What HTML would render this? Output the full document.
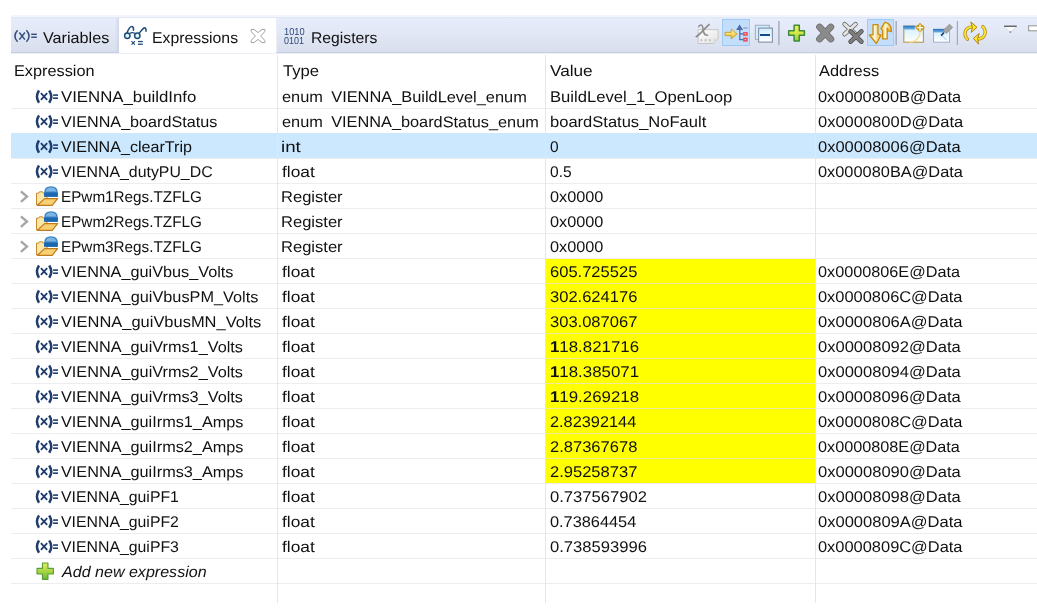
<!DOCTYPE html>
<html><head><meta charset="utf-8"><title>Expressions</title>
<style>
html,body{margin:0;padding:0;background:#fff;}
body{width:1037px;height:616px;position:relative;overflow:hidden;font-family:'Liberation Sans', sans-serif;font-size:15.5px;color:#111;}
.t{position:absolute;white-space:pre;line-height:15.5px;transform-origin:0 0;display:block;}
.i{position:absolute;display:block;}
.hl{position:absolute;left:11px;width:1026px;height:1px;background:#ededed;}
.vl{position:absolute;top:55px;width:1px;height:548px;background:#e6e6ea;}
.sel{position:absolute;left:11px;width:1026px;height:25px;background:#cce8ff;}
.yel{position:absolute;left:546px;width:269px;height:24px;background:#ffff00;}
.yl{position:absolute;left:546px;width:269px;height:1px;background:#ecec9c;}
#tx{position:absolute;left:0;top:0;width:1037px;height:616px;will-change:transform;}
#bar{position:absolute;left:11px;top:15px;width:1026px;height:39px;}
</style></head><body>
<div id="bar">
<div style="position:absolute;left:0;top:0;width:1026px;height:2px;background:#f3f5fd"></div>
<div style="position:absolute;left:0;top:2px;width:1026px;height:36px;background:linear-gradient(#e8edfb,#e3e8f6 40%,#d8deed)"></div>
<div style="position:absolute;left:0;top:2px;width:1026px;height:1px;background:#e2e7f5"></div>
<div style="position:absolute;left:0;top:37px;width:1026px;height:1px;background:#c7cde0"></div>
<div style="position:absolute;left:0;top:38px;width:1026px;height:1px;background:#eef0f7"></div>
<div style="position:absolute;left:104px;top:3px;width:4px;height:34px;background:linear-gradient(90deg,rgba(200,206,226,0),rgba(200,206,226,0.7))"></div>
<div style="position:absolute;left:108px;top:3px;width:157px;height:35px;background:#fff"></div>
<div style="position:absolute;left:265px;top:3px;width:1px;height:34px;background:#eceef5"></div>
</div>
<svg class="i" style="left:11px;top:15px" width="1026" height="39" viewBox="11 15 1026 39">
<defs>
<linearGradient id="gGold" x1="0" y1="0" x2="0" y2="1"><stop offset="0" stop-color="#fff8d0"/><stop offset="0.55" stop-color="#fbd862"/><stop offset="1" stop-color="#eeb422"/></linearGradient>
<linearGradient id="gGold2" x1="0" y1="0" x2="1" y2="0"><stop offset="0" stop-color="#f2bc32"/><stop offset="0.45" stop-color="#fff8dc"/><stop offset="1" stop-color="#efb020"/></linearGradient>
<linearGradient id="gPlus" x1="0" y1="0" x2="0" y2="1"><stop offset="0" stop-color="#f6f052"/><stop offset="0.5" stop-color="#d2e84a"/><stop offset="1" stop-color="#86d238"/></linearGradient>
<linearGradient id="gWin" x1="0" y1="0" x2="0" y2="1"><stop offset="0" stop-color="#cfeefc"/><stop offset="1" stop-color="#ffffff"/></linearGradient>
<linearGradient id="gTitle" x1="0" y1="0" x2="0" y2="1"><stop offset="0" stop-color="#1f6fc0"/><stop offset="1" stop-color="#7fb6e6"/></linearGradient>
<linearGradient id="gLabel" x1="0" y1="0" x2="1" y2="1"><stop offset="0" stop-color="#ffffff"/><stop offset="1" stop-color="#e2e2e2"/></linearGradient>
</defs>
<!-- Variables tab icon (x)= -->
<g fill="none" stroke="#2f4d7c" stroke-width="1.5">
<path d="M17.6 30.2 Q12.2 36 17.6 41.7"/>
<path d="M26.4 30.2 Q31.8 36 26.4 41.7"/>
<path d="M19.3 32.5 L24.9 39.6 M24.9 32.5 L19.3 39.6" stroke-width="1.4"/>
</g>
<rect x="31.2" y="33.6" width="5.6" height="1.4" fill="#2f4d7c"/><rect x="31.2" y="36.5" width="5.6" height="1.4" fill="#2f4d7c"/>
<!-- Expressions glasses icon -->
<g fill="none" stroke="#1f4a78" stroke-width="1.5" stroke-linecap="round">
<circle cx="127.3" cy="35.8" r="2.7" fill="#dcf6fb"/>
<circle cx="137.3" cy="35.8" r="2.7" fill="#dcf6fb"/>
<path d="M129.8 33.2 Q132.3 32.1 134.8 33.2" stroke-width="1.1"/>
<path d="M127.0 32.9 C128.4 29.2 130.4 26.3 132 26.5 C133.3 26.7 133.6 28.4 133.5 30.2"/>
<path d="M139.3 33.1 C141.4 30.6 143 28 144.6 27.8 C145.8 27.7 146.1 29.4 146 31.3"/>
<path d="M131.5 41.1 L134.9 44.6 M134.9 41.1 L131.5 44.6" stroke-width="1.1" stroke-linecap="butt"/>
</g>
<rect x="138" y="40.9" width="4.8" height="1.3" fill="#1f4a78"/><rect x="138" y="43.6" width="4.8" height="1.3" fill="#1f4a78"/>
<!-- close X -->
<path d="M251.2 29.4 H254 L258 32.6 L262 29.4 H264.8 V31.6 L260.6 36 L264.8 40.4 V42.6 H262 L258 39.4 L254 42.6 H251.2 V40.4 L255.4 36 L251.2 31.6 Z" fill="#fff" stroke="#979797" stroke-width="0.9" stroke-linejoin="round"/>

<!-- toolbar -->
<!-- 1: show type names (disabled) -->
<path d="M698.2 29.6 H718.2 V38.8 L713.6 43.5 H698.2 Z" fill="url(#gLabel)" stroke="#c6c6c6" stroke-width="1"/>
<path d="M713.6 43.5 V38.8 H718.2 Z" fill="#dcdcdc"/>
<rect x="700.3" y="39.2" width="2" height="2.1" fill="#c2c2c2"/><rect x="704.6" y="39.2" width="2" height="2.1" fill="#c2c2c2"/><rect x="708.9" y="39.2" width="2" height="2.1" fill="#c2c2c2"/>
<g fill="none" stroke="#8e8e8e" stroke-linecap="round">
<path d="M696.4 36.6 C700 34.5 705 28 709 24.6" stroke-width="1.9"/>
<path d="M698.6 26.6 C700.5 24 702.5 24.5 702.8 27.5 C703.2 31 703.4 35.6 707.6 35.2" stroke-width="1.5"/>
</g>
<!-- 2: highlighted -->
<rect x="722.5" y="19.5" width="27" height="26" fill="#c3defa" stroke="#9ccbf8" stroke-width="1"/>
<path d="M725 32.3 H731.2 V29 L737 33.9 L731.2 38.8 V35.6 H725 Z" fill="url(#gGold)" stroke="#c99a1c" stroke-width="0.9" stroke-linejoin="round"/>
<path d="M739.6 24.4 L743.1 30 H736.1 Z" fill="#4a6aa8"/>
<path d="M739.8 29.8 V39.7 H743.2 M739.8 33.8 H743.2" fill="none" stroke="#4a6aa8" stroke-width="1.2"/>
<rect x="743.2" y="27.4" width="4.4" height="1.1" fill="#8093bd"/>
<rect x="743.1" y="32.1" width="4.6" height="3.7" fill="#e8495a"/><rect x="744.6" y="33.4" width="1.6" height="1" fill="#fbd0d4"/>
<rect x="743.1" y="37.6" width="4.6" height="4" fill="#e8495a"/><rect x="744.6" y="39.1" width="1.6" height="1" fill="#fbd0d4"/>
<!-- 3: collapse all -->
<rect x="755.4" y="25.3" width="14" height="14.2" fill="#cdeefc" stroke="#a7afc4" stroke-width="1.1"/>
<rect x="758.6" y="28.1" width="13.8" height="14" fill="url(#gWin)" stroke="#8a95ae" stroke-width="1.2"/>
<rect x="760" y="34" width="10" height="2" fill="#0c4f86"/>
<rect x="778.1" y="21" width="1.6" height="24" fill="#abafbf"/>
<!-- 4: plus -->
<path d="M794.1 25.2 H799.3 V30.8 H804.4 V35.2 H799.3 V40.9 H794.1 V35.2 H788.7 V30.8 H794.1 Z" fill="url(#gPlus)" stroke="#3d8a3a" stroke-width="1.5" stroke-linejoin="round"/>
<!-- 5: X -->
<g stroke-linecap="round">
<path d="M819.6 27 L830.8 39 M830.8 27 L819.6 39" stroke="#6a6a6a" stroke-width="6.8"/>
<path d="M819.6 27 L830.8 39 M830.8 27 L819.6 39" stroke="#8a8a8a" stroke-width="5.4"/>
<!-- 6: XX -->
<path d="M844.6 24.2 L855.6 34.2 M855.6 24.2 L844.6 34.2" stroke="#5a5a5a" stroke-width="4.4"/>
<path d="M844.6 24.2 L855.6 34.2 M855.6 24.2 L844.6 34.2" stroke="#e4e4e0" stroke-width="3"/>
<path d="M850.6 31.4 L861.4 41.6 M861.4 31.4 L850.6 41.6" stroke="#484848" stroke-width="4.6"/>
<path d="M850.6 31.4 L861.4 41.6 M861.4 31.4 L850.6 41.6" stroke="#7e7e7e" stroke-width="3.2"/>
</g>
<!-- 7: highlighted yellow arrows -->
<rect x="867.5" y="19.5" width="26.1" height="26" fill="#c3defa" stroke="#9ccbf8" stroke-width="1"/>
<path d="M873 24.7 H878 V34 L880.9 35.2 L876.4 43.5 L869.4 35 L873 34.6 Z" fill="url(#gGold2)" stroke="#c98c0c" stroke-width="1.3" stroke-linejoin="round"/>
<path d="M882.6 38.8 V30.4 L880.9 28.6 L885 22.2 C888.8 23.4 891.8 26.6 891.4 31.6 L888.2 30.8 C888.2 29.4 887.8 28.6 887.2 28.2 V38.8 Z" fill="url(#gGold2)" stroke="#c98c0c" stroke-width="1.3" stroke-linejoin="round"/>
<rect x="895.4" y="21" width="1.6" height="24" fill="#abafbf"/>
<!-- 8: new view -->
<rect x="903.8" y="26.2" width="19.6" height="16" fill="url(#gWin)" stroke="#b8964a" stroke-width="1.1"/>
<rect x="903.3" y="25.7" width="11.5" height="3.9" fill="url(#gTitle)"/>
<path d="M920 31.5 C920 37.5 916 42 909.5 42.2" fill="none" stroke="#fbe08a" stroke-width="1.3"/>
<path d="M920 22.8 L925.1 27.7 L920 32.2 L915 27.7 Z" fill="#c89a18"/>
<path d="M920 24.4 V31 M916.8 27.7 H923.2" stroke="#fffbe8" stroke-width="1.3"/>
<!-- 9: pin -->
<rect x="933.5" y="29.4" width="16" height="12.8" fill="url(#gWin)" stroke="#9fb0cc" stroke-width="1"/>
<rect x="933" y="28.9" width="12" height="3.6" fill="url(#gTitle)"/>
<path d="M942 35.6 L946.6 40.2" stroke="#a8d8f2" stroke-width="1.1"/>
<path d="M941 35.6 L944 32.6" stroke="#1a3a78" stroke-width="1.6"/>
<path d="M943.2 30.4 L949.6 24.2 L952.6 27.4 L946.2 33.4 Z" fill="#a4a4a4" stroke="#8e8e8e" stroke-width="0.8"/>
<rect x="956.8" y="21" width="1.2" height="24" fill="#a4a8b8"/>
<!-- 10: refresh -->
<g fill="none" stroke-linecap="round">
<path d="M967.4 39.2 C962.6 34 965.5 27 972 26.8" stroke="#b08a24" stroke-width="3.3"/>
<path d="M967.4 39.2 C962.6 34 965.5 27 972 26.8" stroke="#fbe82a" stroke-width="1.8"/>
<path d="M982.8 26.6 C987.6 31.8 984.5 38.8 978 39" stroke="#b08a24" stroke-width="3.3"/>
<path d="M982.8 26.6 C987.6 31.8 984.5 38.8 978 39" stroke="#fbe82a" stroke-width="1.8"/>
</g>
<path d="M970.8 21.9 L977 27.3 L971.2 32.4 L972.4 27.3 Z" fill="#fdec2c" stroke="#b08216" stroke-width="1" stroke-linejoin="round"/>
<path d="M979.2 33.5 L973.4 38.4 L978.6 44.2 L977.6 38.8 Z" fill="#fdec2c" stroke="#b08216" stroke-width="1" stroke-linejoin="round"/>
<!-- 11: view menu -->
<path d="M1004.4 26.4 H1016.4 L1010.4 32.6 Z" fill="#fbfbfe" stroke="#d4d6e0" stroke-width="0.8"/>
<rect x="1004" y="25.6" width="12.8" height="1.3" fill="#5a5a5a"/>
<rect x="1009.7" y="31.4" width="1.4" height="1.2" fill="#5a5a5a"/>
<!-- 12: minimize -->
<rect x="1028.6" y="25.8" width="12" height="5" fill="#fff" stroke="#9a9a9a" stroke-width="1.1"/>
</svg>

<div class="sel" style="top:133px"></div>
<div class="yel" style="top:259px"></div>
<div class="yel" style="top:284px"></div>
<div class="yel" style="top:309px"></div>
<div class="yel" style="top:334px"></div>
<div class="yel" style="top:359px"></div>
<div class="yel" style="top:384px"></div>
<div class="yel" style="top:409px"></div>
<div class="yel" style="top:434px"></div>
<div class="yel" style="top:459px"></div>
<div class="hl" style="top:108px"></div>
<div class="hl" style="top:158px"></div>
<div class="hl" style="top:183px"></div>
<div class="hl" style="top:208px"></div>
<div class="hl" style="top:233px"></div>
<div class="hl" style="top:258px"></div>
<div class="hl" style="top:283px"></div>
<div class="hl" style="top:308px"></div>
<div class="hl" style="top:333px"></div>
<div class="hl" style="top:358px"></div>
<div class="hl" style="top:383px"></div>
<div class="hl" style="top:408px"></div>
<div class="hl" style="top:433px"></div>
<div class="hl" style="top:458px"></div>
<div class="hl" style="top:483px"></div>
<div class="hl" style="top:508px"></div>
<div class="hl" style="top:533px"></div>
<div class="hl" style="top:558px"></div>
<div class="hl" style="top:583px"></div>
<div class="yl" style="top:283px"></div>
<div class="yl" style="top:308px"></div>
<div class="yl" style="top:333px"></div>
<div class="yl" style="top:358px"></div>
<div class="yl" style="top:383px"></div>
<div class="yl" style="top:408px"></div>
<div class="yl" style="top:433px"></div>
<div class="yl" style="top:458px"></div>
<div class="vl" style="left:277px"></div>
<div class="vl" style="left:545px"></div>
<div class="vl" style="left:815px"></div>
<svg class="i" style="left:34px;top:89px" width="26" height="18" viewBox="0 0 26 18"><g fill="none" stroke="#1f3d6e"><path d="M5.0 1.5 Q0.9 7.6 5.0 13.7" stroke-width="2.5"/><path d="M15.2 1.5 Q19.3 7.6 15.2 13.7" stroke-width="2.5"/><path d="M6.9 4.2 L13.2 10.8 M13.2 4.2 L6.9 10.8" stroke-width="1.8"/></g><rect x="19.1" y="5.3" width="4.9" height="1.6" fill="#1f3d6e"/><rect x="19.1" y="8.4" width="4.9" height="1.6" fill="#1f3d6e"/></svg>
<svg class="i" style="left:34px;top:114px" width="26" height="18" viewBox="0 0 26 18"><g fill="none" stroke="#1f3d6e"><path d="M5.0 1.5 Q0.9 7.6 5.0 13.7" stroke-width="2.5"/><path d="M15.2 1.5 Q19.3 7.6 15.2 13.7" stroke-width="2.5"/><path d="M6.9 4.2 L13.2 10.8 M13.2 4.2 L6.9 10.8" stroke-width="1.8"/></g><rect x="19.1" y="5.3" width="4.9" height="1.6" fill="#1f3d6e"/><rect x="19.1" y="8.4" width="4.9" height="1.6" fill="#1f3d6e"/></svg>
<svg class="i" style="left:34px;top:139px" width="26" height="18" viewBox="0 0 26 18"><g fill="none" stroke="#1f3d6e"><path d="M5.0 1.5 Q0.9 7.6 5.0 13.7" stroke-width="2.5"/><path d="M15.2 1.5 Q19.3 7.6 15.2 13.7" stroke-width="2.5"/><path d="M6.9 4.2 L13.2 10.8 M13.2 4.2 L6.9 10.8" stroke-width="1.8"/></g><rect x="19.1" y="5.3" width="4.9" height="1.6" fill="#1f3d6e"/><rect x="19.1" y="8.4" width="4.9" height="1.6" fill="#1f3d6e"/></svg>
<svg class="i" style="left:34px;top:164px" width="26" height="18" viewBox="0 0 26 18"><g fill="none" stroke="#1f3d6e"><path d="M5.0 1.5 Q0.9 7.6 5.0 13.7" stroke-width="2.5"/><path d="M15.2 1.5 Q19.3 7.6 15.2 13.7" stroke-width="2.5"/><path d="M6.9 4.2 L13.2 10.8 M13.2 4.2 L6.9 10.8" stroke-width="1.8"/></g><rect x="19.1" y="5.3" width="4.9" height="1.6" fill="#1f3d6e"/><rect x="19.1" y="8.4" width="4.9" height="1.6" fill="#1f3d6e"/></svg>
<svg class="i" style="left:17px;top:184px" width="44" height="24" viewBox="0 0 44 24"><path d="M3.9 7.3 L10.0 12.6 L3.9 17.9" fill="none" stroke="#a6a6a6" stroke-width="2.4"/><path d="M19.5 21 V9.2 H21.6 L22.4 7.8 H25.6 L26.4 9.2 H30 V21 Z" fill="#fbe7a6" stroke="#c8862a" stroke-width="1"/><path d="M27.2 12.8 V8.5 Q27.2 2.2 34 2.2 Q40.8 2.2 40.8 8.5 V12.8 Z" fill="#3b85c9"/><path d="M28.6 7.5 Q29.5 3.4 34 3.4 Q38.5 3.4 39.4 7.5 Z" fill="#8fc0e6" opacity="0.8"/><rect x="27.2" y="8.6" width="13.6" height="4.2" fill="#1c68b0"/><path d="M20.5 21.3 L27.6 14.6 H40.6 L35.2 21.3 Z" fill="#f8d072" stroke="#c07a1c" stroke-width="1.2" stroke-linejoin="round"/></svg>
<svg class="i" style="left:17px;top:209px" width="44" height="24" viewBox="0 0 44 24"><path d="M3.9 7.3 L10.0 12.6 L3.9 17.9" fill="none" stroke="#a6a6a6" stroke-width="2.4"/><path d="M19.5 21 V9.2 H21.6 L22.4 7.8 H25.6 L26.4 9.2 H30 V21 Z" fill="#fbe7a6" stroke="#c8862a" stroke-width="1"/><path d="M27.2 12.8 V8.5 Q27.2 2.2 34 2.2 Q40.8 2.2 40.8 8.5 V12.8 Z" fill="#3b85c9"/><path d="M28.6 7.5 Q29.5 3.4 34 3.4 Q38.5 3.4 39.4 7.5 Z" fill="#8fc0e6" opacity="0.8"/><rect x="27.2" y="8.6" width="13.6" height="4.2" fill="#1c68b0"/><path d="M20.5 21.3 L27.6 14.6 H40.6 L35.2 21.3 Z" fill="#f8d072" stroke="#c07a1c" stroke-width="1.2" stroke-linejoin="round"/></svg>
<svg class="i" style="left:17px;top:234px" width="44" height="24" viewBox="0 0 44 24"><path d="M3.9 7.3 L10.0 12.6 L3.9 17.9" fill="none" stroke="#a6a6a6" stroke-width="2.4"/><path d="M19.5 21 V9.2 H21.6 L22.4 7.8 H25.6 L26.4 9.2 H30 V21 Z" fill="#fbe7a6" stroke="#c8862a" stroke-width="1"/><path d="M27.2 12.8 V8.5 Q27.2 2.2 34 2.2 Q40.8 2.2 40.8 8.5 V12.8 Z" fill="#3b85c9"/><path d="M28.6 7.5 Q29.5 3.4 34 3.4 Q38.5 3.4 39.4 7.5 Z" fill="#8fc0e6" opacity="0.8"/><rect x="27.2" y="8.6" width="13.6" height="4.2" fill="#1c68b0"/><path d="M20.5 21.3 L27.6 14.6 H40.6 L35.2 21.3 Z" fill="#f8d072" stroke="#c07a1c" stroke-width="1.2" stroke-linejoin="round"/></svg>
<svg class="i" style="left:34px;top:264px" width="26" height="18" viewBox="0 0 26 18"><g fill="none" stroke="#1f3d6e"><path d="M5.0 1.5 Q0.9 7.6 5.0 13.7" stroke-width="2.5"/><path d="M15.2 1.5 Q19.3 7.6 15.2 13.7" stroke-width="2.5"/><path d="M6.9 4.2 L13.2 10.8 M13.2 4.2 L6.9 10.8" stroke-width="1.8"/></g><rect x="19.1" y="5.3" width="4.9" height="1.6" fill="#1f3d6e"/><rect x="19.1" y="8.4" width="4.9" height="1.6" fill="#1f3d6e"/></svg>
<svg class="i" style="left:34px;top:289px" width="26" height="18" viewBox="0 0 26 18"><g fill="none" stroke="#1f3d6e"><path d="M5.0 1.5 Q0.9 7.6 5.0 13.7" stroke-width="2.5"/><path d="M15.2 1.5 Q19.3 7.6 15.2 13.7" stroke-width="2.5"/><path d="M6.9 4.2 L13.2 10.8 M13.2 4.2 L6.9 10.8" stroke-width="1.8"/></g><rect x="19.1" y="5.3" width="4.9" height="1.6" fill="#1f3d6e"/><rect x="19.1" y="8.4" width="4.9" height="1.6" fill="#1f3d6e"/></svg>
<svg class="i" style="left:34px;top:314px" width="26" height="18" viewBox="0 0 26 18"><g fill="none" stroke="#1f3d6e"><path d="M5.0 1.5 Q0.9 7.6 5.0 13.7" stroke-width="2.5"/><path d="M15.2 1.5 Q19.3 7.6 15.2 13.7" stroke-width="2.5"/><path d="M6.9 4.2 L13.2 10.8 M13.2 4.2 L6.9 10.8" stroke-width="1.8"/></g><rect x="19.1" y="5.3" width="4.9" height="1.6" fill="#1f3d6e"/><rect x="19.1" y="8.4" width="4.9" height="1.6" fill="#1f3d6e"/></svg>
<svg class="i" style="left:34px;top:339px" width="26" height="18" viewBox="0 0 26 18"><g fill="none" stroke="#1f3d6e"><path d="M5.0 1.5 Q0.9 7.6 5.0 13.7" stroke-width="2.5"/><path d="M15.2 1.5 Q19.3 7.6 15.2 13.7" stroke-width="2.5"/><path d="M6.9 4.2 L13.2 10.8 M13.2 4.2 L6.9 10.8" stroke-width="1.8"/></g><rect x="19.1" y="5.3" width="4.9" height="1.6" fill="#1f3d6e"/><rect x="19.1" y="8.4" width="4.9" height="1.6" fill="#1f3d6e"/></svg>
<svg class="i" style="left:34px;top:364px" width="26" height="18" viewBox="0 0 26 18"><g fill="none" stroke="#1f3d6e"><path d="M5.0 1.5 Q0.9 7.6 5.0 13.7" stroke-width="2.5"/><path d="M15.2 1.5 Q19.3 7.6 15.2 13.7" stroke-width="2.5"/><path d="M6.9 4.2 L13.2 10.8 M13.2 4.2 L6.9 10.8" stroke-width="1.8"/></g><rect x="19.1" y="5.3" width="4.9" height="1.6" fill="#1f3d6e"/><rect x="19.1" y="8.4" width="4.9" height="1.6" fill="#1f3d6e"/></svg>
<svg class="i" style="left:34px;top:389px" width="26" height="18" viewBox="0 0 26 18"><g fill="none" stroke="#1f3d6e"><path d="M5.0 1.5 Q0.9 7.6 5.0 13.7" stroke-width="2.5"/><path d="M15.2 1.5 Q19.3 7.6 15.2 13.7" stroke-width="2.5"/><path d="M6.9 4.2 L13.2 10.8 M13.2 4.2 L6.9 10.8" stroke-width="1.8"/></g><rect x="19.1" y="5.3" width="4.9" height="1.6" fill="#1f3d6e"/><rect x="19.1" y="8.4" width="4.9" height="1.6" fill="#1f3d6e"/></svg>
<svg class="i" style="left:34px;top:414px" width="26" height="18" viewBox="0 0 26 18"><g fill="none" stroke="#1f3d6e"><path d="M5.0 1.5 Q0.9 7.6 5.0 13.7" stroke-width="2.5"/><path d="M15.2 1.5 Q19.3 7.6 15.2 13.7" stroke-width="2.5"/><path d="M6.9 4.2 L13.2 10.8 M13.2 4.2 L6.9 10.8" stroke-width="1.8"/></g><rect x="19.1" y="5.3" width="4.9" height="1.6" fill="#1f3d6e"/><rect x="19.1" y="8.4" width="4.9" height="1.6" fill="#1f3d6e"/></svg>
<svg class="i" style="left:34px;top:439px" width="26" height="18" viewBox="0 0 26 18"><g fill="none" stroke="#1f3d6e"><path d="M5.0 1.5 Q0.9 7.6 5.0 13.7" stroke-width="2.5"/><path d="M15.2 1.5 Q19.3 7.6 15.2 13.7" stroke-width="2.5"/><path d="M6.9 4.2 L13.2 10.8 M13.2 4.2 L6.9 10.8" stroke-width="1.8"/></g><rect x="19.1" y="5.3" width="4.9" height="1.6" fill="#1f3d6e"/><rect x="19.1" y="8.4" width="4.9" height="1.6" fill="#1f3d6e"/></svg>
<svg class="i" style="left:34px;top:464px" width="26" height="18" viewBox="0 0 26 18"><g fill="none" stroke="#1f3d6e"><path d="M5.0 1.5 Q0.9 7.6 5.0 13.7" stroke-width="2.5"/><path d="M15.2 1.5 Q19.3 7.6 15.2 13.7" stroke-width="2.5"/><path d="M6.9 4.2 L13.2 10.8 M13.2 4.2 L6.9 10.8" stroke-width="1.8"/></g><rect x="19.1" y="5.3" width="4.9" height="1.6" fill="#1f3d6e"/><rect x="19.1" y="8.4" width="4.9" height="1.6" fill="#1f3d6e"/></svg>
<svg class="i" style="left:34px;top:489px" width="26" height="18" viewBox="0 0 26 18"><g fill="none" stroke="#1f3d6e"><path d="M5.0 1.5 Q0.9 7.6 5.0 13.7" stroke-width="2.5"/><path d="M15.2 1.5 Q19.3 7.6 15.2 13.7" stroke-width="2.5"/><path d="M6.9 4.2 L13.2 10.8 M13.2 4.2 L6.9 10.8" stroke-width="1.8"/></g><rect x="19.1" y="5.3" width="4.9" height="1.6" fill="#1f3d6e"/><rect x="19.1" y="8.4" width="4.9" height="1.6" fill="#1f3d6e"/></svg>
<svg class="i" style="left:34px;top:514px" width="26" height="18" viewBox="0 0 26 18"><g fill="none" stroke="#1f3d6e"><path d="M5.0 1.5 Q0.9 7.6 5.0 13.7" stroke-width="2.5"/><path d="M15.2 1.5 Q19.3 7.6 15.2 13.7" stroke-width="2.5"/><path d="M6.9 4.2 L13.2 10.8 M13.2 4.2 L6.9 10.8" stroke-width="1.8"/></g><rect x="19.1" y="5.3" width="4.9" height="1.6" fill="#1f3d6e"/><rect x="19.1" y="8.4" width="4.9" height="1.6" fill="#1f3d6e"/></svg>
<svg class="i" style="left:34px;top:539px" width="26" height="18" viewBox="0 0 26 18"><g fill="none" stroke="#1f3d6e"><path d="M5.0 1.5 Q0.9 7.6 5.0 13.7" stroke-width="2.5"/><path d="M15.2 1.5 Q19.3 7.6 15.2 13.7" stroke-width="2.5"/><path d="M6.9 4.2 L13.2 10.8 M13.2 4.2 L6.9 10.8" stroke-width="1.8"/></g><rect x="19.1" y="5.3" width="4.9" height="1.6" fill="#1f3d6e"/><rect x="19.1" y="8.4" width="4.9" height="1.6" fill="#1f3d6e"/></svg>
<svg class="i" style="left:35.7px;top:561.8px" width="18.4" height="18.4" viewBox="0 0 18 18"><defs><linearGradient id="pg35" x1="0" y1="0" x2="0" y2="1"><stop offset="0" stop-color="#e2ee62"/><stop offset="0.5" stop-color="#a9d643"/><stop offset="1" stop-color="#6cb53a"/></linearGradient></defs><path d="M6.3 1 H11.7 V6.3 H17 V11.7 H11.7 V17 H6.3 V11.7 H1 V6.3 H6.3 Z" fill="url(#pg35)" stroke="#5a9e38" stroke-width="1.1" stroke-linejoin="round"/></svg>
<div id="tx">
<span class="t" style="left:13.75px;top:63.38px;transform:scaleX(1.0499) rotate(0.05deg);">Expression</span>
<span class="t" style="left:282.60px;top:63.38px;transform:scaleX(1.0733) rotate(0.05deg);">Type</span>
<span class="t" style="left:550.20px;top:63.38px;transform:scaleX(1.1090) rotate(0.05deg);">Value</span>
<span class="t" style="left:818.90px;top:63.38px;transform:scaleX(1.0576) rotate(0.05deg);">Address</span>
<span class="t" style="left:61.00px;top:89.48px;transform:scaleX(1.0836) rotate(0.05deg);">VIENNA_buildInfo</span>
<span class="t" style="left:61.00px;top:114.48px;transform:scaleX(1.0422) rotate(0.05deg);">VIENNA_boardStatus</span>
<span class="t" style="left:61.00px;top:139.48px;transform:scaleX(1.0389) rotate(0.05deg);">VIENNA_clearTrip</span>
<span class="t" style="left:61.00px;top:164.48px;transform:scaleX(1.0232) rotate(0.05deg);">VIENNA_dutyPU_DC</span>
<span class="t" style="left:60.52px;top:189.48px;transform:scaleX(0.9850) rotate(0.05deg);">EPwm1Regs.TZFLG</span>
<span class="t" style="left:60.52px;top:214.48px;transform:scaleX(0.9850) rotate(0.05deg);">EPwm2Regs.TZFLG</span>
<span class="t" style="left:60.52px;top:239.48px;transform:scaleX(0.9850) rotate(0.05deg);">EPwm3Regs.TZFLG</span>
<span class="t" style="left:61.00px;top:264.48px;transform:scaleX(1.0478) rotate(0.05deg);">VIENNA_guiVbus_Volts</span>
<span class="t" style="left:61.00px;top:289.48px;transform:scaleX(1.0507) rotate(0.05deg);">VIENNA_guiVbusPM_Volts</span>
<span class="t" style="left:61.00px;top:314.48px;transform:scaleX(1.0618) rotate(0.05deg);">VIENNA_guiVbusMN_Volts</span>
<span class="t" style="left:61.00px;top:339.48px;transform:scaleX(1.0490) rotate(0.05deg);">VIENNA_guiVrms1_Volts</span>
<span class="t" style="left:61.00px;top:364.48px;transform:scaleX(1.0490) rotate(0.05deg);">VIENNA_guiVrms2_Volts</span>
<span class="t" style="left:61.00px;top:389.48px;transform:scaleX(1.0490) rotate(0.05deg);">VIENNA_guiVrms3_Volts</span>
<span class="t" style="left:61.00px;top:414.48px;transform:scaleX(1.0485) rotate(0.05deg);">VIENNA_guiIrms1_Amps</span>
<span class="t" style="left:61.00px;top:439.48px;transform:scaleX(1.0485) rotate(0.05deg);">VIENNA_guiIrms2_Amps</span>
<span class="t" style="left:61.00px;top:464.48px;transform:scaleX(1.0485) rotate(0.05deg);">VIENNA_guiIrms3_Amps</span>
<span class="t" style="left:61.00px;top:489.48px;transform:scaleX(1.0216) rotate(0.05deg);">VIENNA_guiPF1</span>
<span class="t" style="left:61.00px;top:514.48px;transform:scaleX(1.0216) rotate(0.05deg);">VIENNA_guiPF2</span>
<span class="t" style="left:61.00px;top:539.48px;transform:scaleX(1.0216) rotate(0.05deg);">VIENNA_guiPF3</span>
<span class="t" style="left:62.04px;top:564.48px;transform:scaleX(1.0360) rotate(0.05deg);font-style:italic;">Add new expression</span>
<span class="t" style="left:281.50px;top:89.48px;transform:scaleX(1.0554) rotate(0.05deg);word-spacing:3.6px;">enum VIENNA_BuildLevel_enum</span>
<span class="t" style="left:281.50px;top:114.48px;transform:scaleX(1.0528) rotate(0.05deg);word-spacing:3.6px;">enum VIENNA_boardStatus_enum</span>
<span class="t" style="left:280.79px;top:139.48px;transform:scaleX(1.2077) rotate(0.05deg);">int</span>
<span class="t" style="left:282.00px;top:164.48px;transform:scaleX(1.1170) rotate(0.05deg);">float</span>
<span class="t" style="left:280.93px;top:189.48px;transform:scaleX(1.0680) rotate(0.05deg);">Register</span>
<span class="t" style="left:280.93px;top:214.48px;transform:scaleX(1.0680) rotate(0.05deg);">Register</span>
<span class="t" style="left:280.93px;top:239.48px;transform:scaleX(1.0680) rotate(0.05deg);">Register</span>
<span class="t" style="left:282.00px;top:264.48px;transform:scaleX(1.1170) rotate(0.05deg);">float</span>
<span class="t" style="left:282.00px;top:289.48px;transform:scaleX(1.1170) rotate(0.05deg);">float</span>
<span class="t" style="left:282.00px;top:314.48px;transform:scaleX(1.1170) rotate(0.05deg);">float</span>
<span class="t" style="left:282.00px;top:339.48px;transform:scaleX(1.1170) rotate(0.05deg);">float</span>
<span class="t" style="left:282.00px;top:364.48px;transform:scaleX(1.1170) rotate(0.05deg);">float</span>
<span class="t" style="left:282.00px;top:389.48px;transform:scaleX(1.1170) rotate(0.05deg);">float</span>
<span class="t" style="left:282.00px;top:414.48px;transform:scaleX(1.1170) rotate(0.05deg);">float</span>
<span class="t" style="left:282.00px;top:439.48px;transform:scaleX(1.1170) rotate(0.05deg);">float</span>
<span class="t" style="left:282.00px;top:464.48px;transform:scaleX(1.1170) rotate(0.05deg);">float</span>
<span class="t" style="left:282.00px;top:489.48px;transform:scaleX(1.1170) rotate(0.05deg);">float</span>
<span class="t" style="left:282.00px;top:514.48px;transform:scaleX(1.1170) rotate(0.05deg);">float</span>
<span class="t" style="left:282.00px;top:539.48px;transform:scaleX(1.1170) rotate(0.05deg);">float</span>
<span class="t" style="left:549.73px;top:89.48px;transform:scaleX(1.0734) rotate(0.05deg);">BuildLevel_1_OpenLoop</span>
<span class="t" style="left:549.73px;top:114.48px;transform:scaleX(1.0666) rotate(0.05deg);">boardStatus_NoFault</span>
<span class="t" style="left:550.20px;top:139.48px;transform:scaleX(1.0000) rotate(0.05deg);">0</span>
<span class="t" style="left:550.20px;top:164.48px;transform:scaleX(1.0035) rotate(0.05deg);">0.5</span>
<span class="t" style="left:550.20px;top:189.48px;transform:scaleX(1.0501) rotate(0.05deg);">0x0000</span>
<span class="t" style="left:550.20px;top:214.48px;transform:scaleX(1.0501) rotate(0.05deg);">0x0000</span>
<span class="t" style="left:550.20px;top:239.48px;transform:scaleX(1.0501) rotate(0.05deg);">0x0000</span>
<span class="t" style="left:549.90px;top:264.48px;transform:scaleX(1.0668) rotate(0.05deg);">605.725525</span>
<span class="t" style="left:549.90px;top:289.48px;transform:scaleX(1.0668) rotate(0.05deg);">302.624176</span>
<span class="t" style="left:549.90px;top:314.48px;transform:scaleX(1.0668) rotate(0.05deg);">303.087067</span>
<span class="t" style="left:549.81px;top:339.48px;transform:scaleX(1.0870) rotate(0.05deg);"><b>1</b>18.821716</span>
<span class="t" style="left:549.81px;top:364.48px;transform:scaleX(1.0870) rotate(0.05deg);"><b>1</b>18.385071</span>
<span class="t" style="left:549.81px;top:389.48px;transform:scaleX(1.0870) rotate(0.05deg);"><b>1</b>19.269218</span>
<span class="t" style="left:549.90px;top:414.48px;transform:scaleX(1.0539) rotate(0.05deg);">2.82392144</span>
<span class="t" style="left:549.90px;top:439.48px;transform:scaleX(1.0668) rotate(0.05deg);">2.87367678</span>
<span class="t" style="left:549.90px;top:464.48px;transform:scaleX(1.0668) rotate(0.05deg);">2.95258737</span>
<span class="t" style="left:549.90px;top:489.48px;transform:scaleX(1.0702) rotate(0.05deg);">0.737567902</span>
<span class="t" style="left:549.90px;top:514.48px;transform:scaleX(1.0539) rotate(0.05deg);">0.73864454</span>
<span class="t" style="left:549.90px;top:539.48px;transform:scaleX(1.0702) rotate(0.05deg);">0.738593996</span>
<span class="t" style="left:818.00px;top:89.48px;transform:scaleX(1.0559) rotate(0.05deg);">0x0000800B@Data</span>
<span class="t" style="left:818.00px;top:114.48px;transform:scaleX(1.0646) rotate(0.05deg);">0x0000800D@Data</span>
<span class="t" style="left:818.00px;top:139.48px;transform:scaleX(1.0657) rotate(0.05deg);">0x00008006@Data</span>
<span class="t" style="left:818.00px;top:164.48px;transform:scaleX(1.0558) rotate(0.05deg);">0x000080BA@Data</span>
<span class="t" style="left:818.00px;top:264.48px;transform:scaleX(1.0478) rotate(0.05deg);">0x0000806E@Data</span>
<span class="t" style="left:818.00px;top:289.48px;transform:scaleX(1.0595) rotate(0.05deg);">0x0000806C@Data</span>
<span class="t" style="left:818.00px;top:314.48px;transform:scaleX(1.0662) rotate(0.05deg);">0x0000806A@Data</span>
<span class="t" style="left:818.00px;top:339.48px;transform:scaleX(1.0664) rotate(0.05deg);">0x00008092@Data</span>
<span class="t" style="left:818.00px;top:364.48px;transform:scaleX(1.0664) rotate(0.05deg);">0x00008094@Data</span>
<span class="t" style="left:818.00px;top:389.48px;transform:scaleX(1.0664) rotate(0.05deg);">0x00008096@Data</span>
<span class="t" style="left:818.00px;top:414.48px;transform:scaleX(1.0595) rotate(0.05deg);">0x0000808C@Data</span>
<span class="t" style="left:818.00px;top:439.48px;transform:scaleX(1.0470) rotate(0.05deg);">0x0000808E@Data</span>
<span class="t" style="left:818.00px;top:464.48px;transform:scaleX(1.0664) rotate(0.05deg);">0x00008090@Data</span>
<span class="t" style="left:818.00px;top:489.48px;transform:scaleX(1.0664) rotate(0.05deg);">0x00008098@Data</span>
<span class="t" style="left:818.00px;top:514.48px;transform:scaleX(1.0662) rotate(0.05deg);">0x0000809A@Data</span>
<span class="t" style="left:818.00px;top:539.48px;transform:scaleX(1.0595) rotate(0.05deg);">0x0000809C@Data</span>
<span class="t" style="left:43.20px;top:29.68px;transform:scaleX(1.0452) rotate(0.05deg);">Variables</span>
<span class="t" style="left:152.18px;top:29.68px;transform:scaleX(1.0194) rotate(0.05deg);">Expressions</span>
<span class="t" style="left:310.69px;top:29.68px;transform:scaleX(1.0137) rotate(0.05deg);">Registers</span>
<span class="t" style="left:284.20px;top:26.75px;transform:scaleX(0.9194) rotate(0.05deg);font-size:10.1px;line-height:10.1px;color:#2c4a7c;">1010</span>
<span class="t" style="left:283.50px;top:35.55px;transform:scaleX(0.8888) rotate(0.05deg);font-size:10.1px;line-height:10.1px;color:#2c4a7c;">0101</span>
</div>
</body></html>
